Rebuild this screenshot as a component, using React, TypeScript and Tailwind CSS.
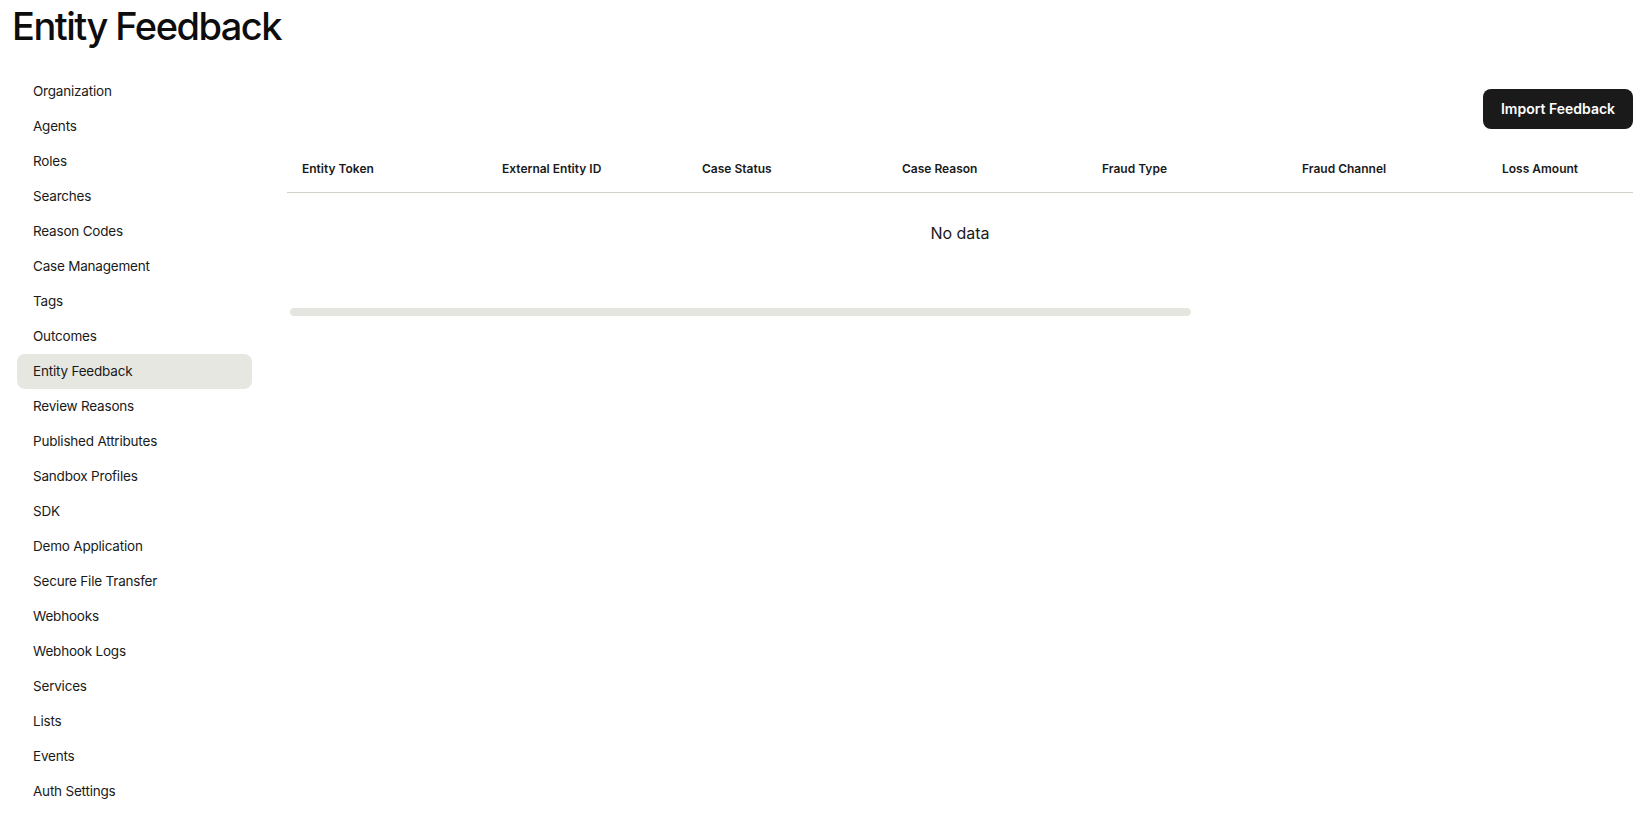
import React from "react";

const navItems = [
  "Organization",
  "Agents",
  "Roles",
  "Searches",
  "Reason Codes",
  "Case Management",
  "Tags",
  "Outcomes",
  "Entity Feedback",
  "Review Reasons",
  "Published Attributes",
  "Sandbox Profiles",
  "SDK",
  "Demo Application",
  "Secure File Transfer",
  "Webhooks",
  "Webhook Logs",
  "Services",
  "Lists",
  "Events",
  "Auth Settings",
];

const columns = [
  "Entity Token",
  "External Entity ID",
  "Case Status",
  "Case Reason",
  "Fraud Type",
  "Fraud Channel",
  "Loss Amount",
];

export default function App() {
  return (
    <div className="min-h-screen bg-white text-[#1a1a1a] font-['Inter',sans-serif] overflow-hidden">
      <h1 className="pl-[12px] pt-[6px] text-[38px] leading-[40px] font-medium tracking-[-0.04em] text-[#0d0d0d]">
        Entity Feedback
      </h1>
      <div className="flex mt-[28px]">
        <nav className="w-[287px] shrink-0 pl-[17px] pr-[35px] flex flex-col">
          {navItems.map((item) => (
            <div
              key={item}
              className={
                item === "Entity Feedback"
                  ? "h-[35px] flex items-center px-4 rounded-lg text-[13.5px] tracking-[-0.015em] bg-[#e7e7e2]"
                  : "h-[35px] flex items-center px-4 rounded-lg text-[13.5px] tracking-[-0.015em]"
              }
            >
              {item}
            </div>
          ))}
        </nav>
        <main className="flex-1 min-w-0 pr-[15px] pt-[15px]">
          <div className="flex justify-end">
            <button className="h-10 w-[150px] rounded-lg bg-[#1a1a1a] text-white text-sm font-semibold">
              Import Feedback
            </button>
          </div>
          <div className="mt-4 overflow-hidden">
            <div className="min-w-[1400px] grid grid-cols-[repeat(7,200px)] border-b border-[#d0d0c9]">
              {columns.map((c) => (
                <div key={c} className="pl-[15px] pr-4 pt-4 pb-[15px] text-xs leading-4 font-semibold">
                  {c}
                </div>
              ))}
            </div>
            <div className="h-[80px] flex items-center justify-center text-base">No data</div>
          </div>
          <div className="ml-[3px] mt-[35px] w-[901px] h-2 rounded-full bg-[#e6e6e1]" />
        </main>
      </div>
    </div>
  );
}
